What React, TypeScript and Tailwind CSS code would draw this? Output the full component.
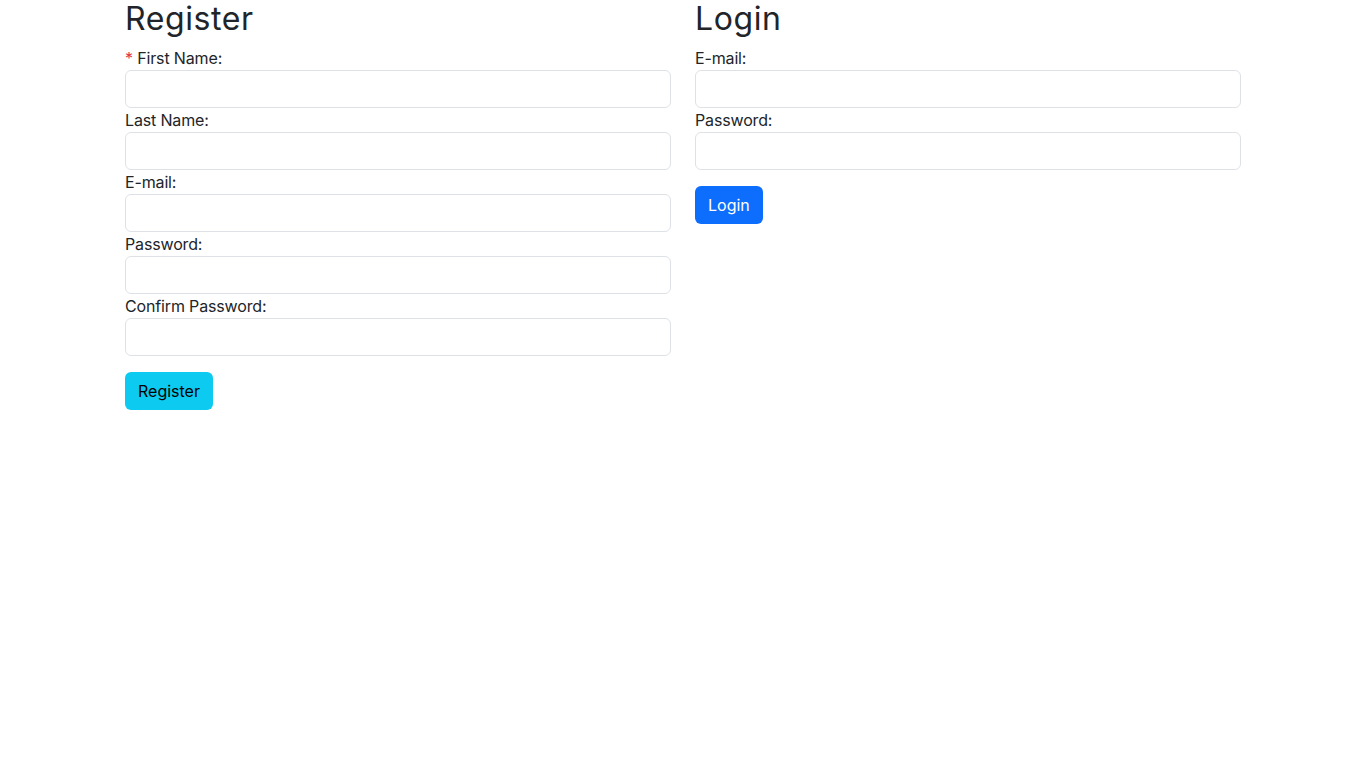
export default function App() {
  const registerFields = [
    { label: 'First Name:', required: true, type: 'text' },
    { label: 'Last Name:', required: false, type: 'text' },
    { label: 'E-mail:', required: false, type: 'email' },
    { label: 'Password:', required: false, type: 'password' },
    { label: 'Confirm Password:', required: false, type: 'password' },
  ];
  const loginFields = [
    { label: 'E-mail:', type: 'email' },
    { label: 'Password:', type: 'password' },
  ];

  return (
    <div className="min-h-screen bg-white text-[#212529] text-base leading-6 font-['Inter','Liberation_Sans',sans-serif]">
      <div className="w-[1140px] mx-auto px-3">
        <div className="grid grid-cols-2 gap-x-6">
          {/* Register */}
          <div>
            <h2 className="text-[32px] leading-[1.2] font-normal tracking-[0.6px] mb-2">Register</h2>
            <form>
              {registerFields.map((f) => (
                <div key={f.label}>
                  <label className="block tracking-[-0.15px]">
                    {f.required && <span className="text-[#dc3545]">* </span>}
                    {f.label}
                  </label>
                  <input
                    type={f.type}
                    className="block w-full h-[38px] px-3 border border-[#dee2e6] rounded-[6px] bg-white outline-none"
                  />
                </div>
              ))}
              <button
                type="button"
                className="mt-4 h-[38px] px-[13px] rounded-[6px] bg-[#0dcaf0] text-black"
              >
                Register
              </button>
            </form>
          </div>

          {/* Login */}
          <div>
            <h2 className="text-[32px] leading-[1.2] font-normal tracking-[0.6px] mb-2">Login</h2>
            <form>
              {loginFields.map((f) => (
                <div key={f.label}>
                  <label className="block tracking-[-0.15px]">{f.label}</label>
                  <input
                    type={f.type}
                    className="block w-full h-[38px] px-3 border border-[#dee2e6] rounded-[6px] bg-white outline-none"
                  />
                </div>
              ))}
              <button
                type="button"
                className="mt-4 h-[38px] px-[13px] rounded-[6px] bg-[#0d6efd] text-white"
              >
                Login
              </button>
            </form>
          </div>
        </div>
      </div>
    </div>
  );
}
